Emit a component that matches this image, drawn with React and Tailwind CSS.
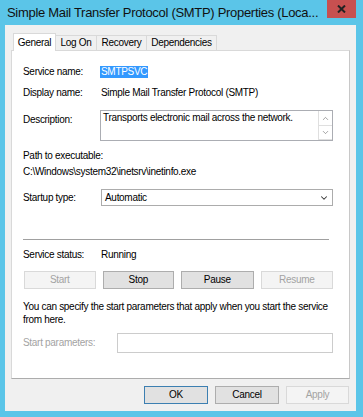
import { ChevronDown, ChevronUp } from 'lucide-react';

function Btn({ children, w, disabled, primary }) {
  let cls = 'bg-[#e1e1e1] border-[#adadad] text-black';
  if (disabled) cls = 'bg-[#f4f4f4] border-[#d9d9d9] text-[#a3a3a3]';
  if (primary) cls = 'bg-[#e1e1e1] border-[#3c7fb1] text-black';
  return (
    <div
      className={`h-[18px] border flex items-center justify-center ${cls}`}
      style={{ width: w }}
    >
      {children}
    </div>
  );
}

function Row({ label, children, className = '' }) {
  return (
    <div className={`flex ${className}`}>
      <div className="w-[78px] shrink-0">{label}</div>
      {children}
    </div>
  );
}

export default function App() {
  return (
    <div className="w-[363px] h-[417px] bg-[#5bc5e8] flex flex-col pl-[5px] pr-[7px] pb-[6px] font-['Liberation_Sans',Arial,sans-serif] text-black">
      {/* Title bar */}
      <div className="h-[25px] flex items-start shrink-0">
        <div className="flex-1 pl-[2px] pt-[5px] text-[13px] leading-[15px] tracking-[-0.3px] text-[#111] whitespace-nowrap">
          Simple Mail Transfer Protocol (SMTP) Properties (Loca...
        </div>
        <div className="w-[29px] h-[18px] shrink-0 bg-[#c75050] flex items-center justify-center">
          <svg width="9" height="8" viewBox="0 0 9 8">
            <path d="M1 0.5 L8 7.5 M8 0.5 L1 7.5" stroke="#222" strokeWidth="2" />
          </svg>
        </div>
      </div>

      {/* Body */}
      <div className="flex-1 bg-[#f0f0f0] pt-[8px] pl-[6px] pr-[6px] text-[10px] leading-[12px] tracking-[-0.3px]">
        {/* Tabs */}
        <div className="flex items-end h-[17px] pl-[2px] relative z-10">
          <div className="w-[43px] h-[18px] -mb-px bg-white border border-b-0 border-[#d9d9d9] flex items-center justify-center">
            General
          </div>
          <div className="w-[41px] h-[15px] bg-[#f0f0f0] border border-l-0 border-b-0 border-[#d9d9d9] flex items-center justify-center">
            Log On
          </div>
          <div className="w-[50px] h-[15px] bg-[#f0f0f0] border border-l-0 border-b-0 border-[#d9d9d9] flex items-center justify-center">
            Recovery
          </div>
          <div className="w-[70px] h-[15px] bg-[#f0f0f0] border border-l-0 border-b-0 border-[#d9d9d9] flex items-center justify-center">
            Dependencies
          </div>
        </div>

        {/* Panel */}
        <div className="h-[329px] bg-white border border-[#d9d9d9] border-b-[#acacac] border-r-[#c8c8c8] pt-[15px] pl-[11px] pr-[16px]">
          <Row label="Service name:" className="h-[12px]">
            <span className="bg-[#3399ff] text-white px-px -ml-px leading-[12px]">SMTPSVC</span>
          </Row>
          <Row label="Display name:" className="h-[12px] mt-[9px]">
            <span>Simple Mail Transfer Protocol (SMTP)</span>
          </Row>
          <Row label={<div className="pt-[4px]">Description:</div>} className="mt-[11px]">
            <div className="-ml-px w-[233px] h-[31px] border border-[#abadb3] flex">
              <div className="flex-1 pl-[2px] pt-px">Transports electronic mail across the network.</div>
              <div className="w-[14px] flex flex-col">
                <div className="h-[15px] border border-t-0 border-r-0 border-[#dfdfdf] flex items-center justify-center">
                  <ChevronUp size={9} strokeWidth={1.5} color="#606060" />
                </div>
                <div className="h-[14px] border border-t-0 border-r-0 border-[#dfdfdf] flex items-center justify-center">
                  <ChevronDown size={9} strokeWidth={1.5} color="#606060" />
                </div>
              </div>
            </div>
          </Row>
          <div className="mt-[9px] h-[12px]">Path to executable:</div>
          <div className="mt-[4px] h-[12px]">C:\Windows\system32\inetsrv\inetinfo.exe</div>
          <Row label={<div className="pt-[3px]">Startup type:</div>} className="mt-[11px]">
            <div className="w-[232px] h-[17px] border border-[#acacac] flex items-center pl-[3px] pr-[3px]">
              <span className="flex-1">Automatic</span>
              <ChevronDown size={10} strokeWidth={2.5} color="#333" />
            </div>
          </Row>
          <div className="mt-[33px] h-px bg-[#a0a0a0] w-[306px]" />
          <Row label="Service status:" className="mt-[9px] h-[12px]">
            <span>Running</span>
          </Row>
          <div className="mt-[10px] flex gap-[7px] pl-px">
            <Btn w={72} disabled>Start</Btn>
            <Btn w={72}>Stop</Btn>
            <Btn w={73}>Pause</Btn>
            <Btn w={73} disabled>Resume</Btn>
          </div>
          <div className="mt-[11px] leading-[13px] w-[310px]">
            You can specify the start parameters that apply when you start the service from here.
          </div>
          <div className="mt-[7px] flex items-center">
            <div className="w-[94px] text-[#a3a3a3]">Start parameters:</div>
            <div className="w-[216px] h-[20px] border border-[#cccccc] bg-white" />
          </div>
        </div>

        {/* Bottom buttons */}
        <div className="mt-[7px] flex justify-end gap-[7px] pr-[1px]">
          <Btn w={64} primary>OK</Btn>
          <Btn w={64}>Cancel</Btn>
          <Btn w={63} disabled>Apply</Btn>
        </div>
      </div>
    </div>
  );
}
